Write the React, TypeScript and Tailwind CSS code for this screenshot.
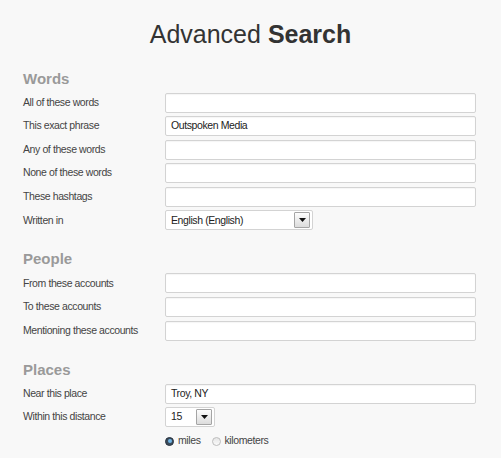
import React from 'react';

const wordRows = [
  { label: 'All of these words', value: '' },
  { label: 'This exact phrase', value: 'Outspoken Media' },
  { label: 'Any of these words', value: '' },
  { label: 'None of these words', value: '' },
  { label: 'These hashtags', value: '' },
];

const peopleRows = ['From these accounts', 'To these accounts', 'Mentioning these accounts'];

function Label({ children }: { children: React.ReactNode }) {
  return <div className="w-[142px] shrink-0 text-[10.5px] tracking-[-0.4px] text-[#444]">{children}</div>;
}

function TextInput({ value }: { value?: string }) {
  return (
    <div className="w-[311px] h-5 bg-white border border-[#d3d3d3] rounded-[2px] shadow-[inset_0_1px_1px_rgba(0,0,0,0.04)] flex items-center px-[5px] text-[10.5px] tracking-[-0.4px] text-[#222]">
      {value}
    </div>
  );
}

function ArrowBtn() {
  return (
    <div className="w-4 h-4 border border-[#a5a5a5] rounded-[1px] bg-gradient-to-b from-[#fdfdfd] to-[#dcdcdc] flex items-center justify-center">
      <svg width="7" height="4" viewBox="0 0 7 4"><path d="M0 0h7L3.5 4z" fill="#111" /></svg>
    </div>
  );
}

function Select({ value, width }: { value: string; width: string }) {
  return (
    <div className={`${width} h-5 bg-white border border-[#d3d3d3] rounded-[2px] flex items-center justify-between pl-[5px] pr-[2px] text-[10.5px] tracking-[-0.4px] text-[#222]`}>
      <span>{value}</span>
      <ArrowBtn />
    </div>
  );
}

function Row({ label, children }: { label: string; children: React.ReactNode }) {
  return (
    <div className="flex items-center h-5">
      <Label>{label}</Label>
      {children}
    </div>
  );
}

function Heading({ children }: { children: React.ReactNode }) {
  return <h2 className="text-[15px] leading-4 font-bold text-[#9a9a9a] mb-[6px]">{children}</h2>;
}

export default function App() {
  return (
    <div className="w-[501px] h-[458px] overflow-hidden bg-[#f8f8f8] font-['Liberation_Sans',Arial,sans-serif]">
      <h1 className="pt-[22px] text-center text-[25px] leading-[25px] text-[#333]">
        Advanced <span className="font-bold">Search</span>
      </h1>

      <div className="pl-[23px] mt-[23.5px]">
        <Heading>Words</Heading>
        <div className="flex flex-col gap-[3.6px]">
          {wordRows.map(r => (
            <Row key={r.label} label={r.label}><TextInput value={r.value} /></Row>
          ))}
          <Row label="Written in"><Select value="English (English)" width="w-[148px]" /></Row>
        </div>
      </div>

      <div className="pl-[23px] mt-[21px]">
        <Heading>People</Heading>
        <div className="flex flex-col gap-[3.6px]">
          {peopleRows.map(l => (
            <Row key={l} label={l}><TextInput /></Row>
          ))}
        </div>
      </div>

      <div className="pl-[23px] mt-[21px]">
        <Heading>Places</Heading>
        <div className="flex flex-col gap-[3.6px]">
          <Row label="Near this place"><TextInput value="Troy, NY" /></Row>
          <Row label="Within this distance"><Select value="15" width="w-[50px]" /></Row>
        </div>
        <div className="flex items-center mt-[6px] ml-[142px] text-[10.5px] tracking-[-0.4px] text-[#444]">
          <span className="w-[9px] h-[9px] rounded-full bg-[#3a4a5a] border border-[#2a3440] flex items-center justify-center">
            <span className="w-[4px] h-[4px] rounded-full bg-[#6fb5e6]" />
          </span>
          <span className="ml-[4px]">miles</span>
          <span className="ml-[11px] w-[9px] h-[9px] rounded-full bg-gradient-to-b from-[#e6e6e6] to-[#fafafa] border border-[#bdbdbd]" />
          <span className="ml-[4px]">kilometers</span>
        </div>
      </div>
    </div>
  );
}
